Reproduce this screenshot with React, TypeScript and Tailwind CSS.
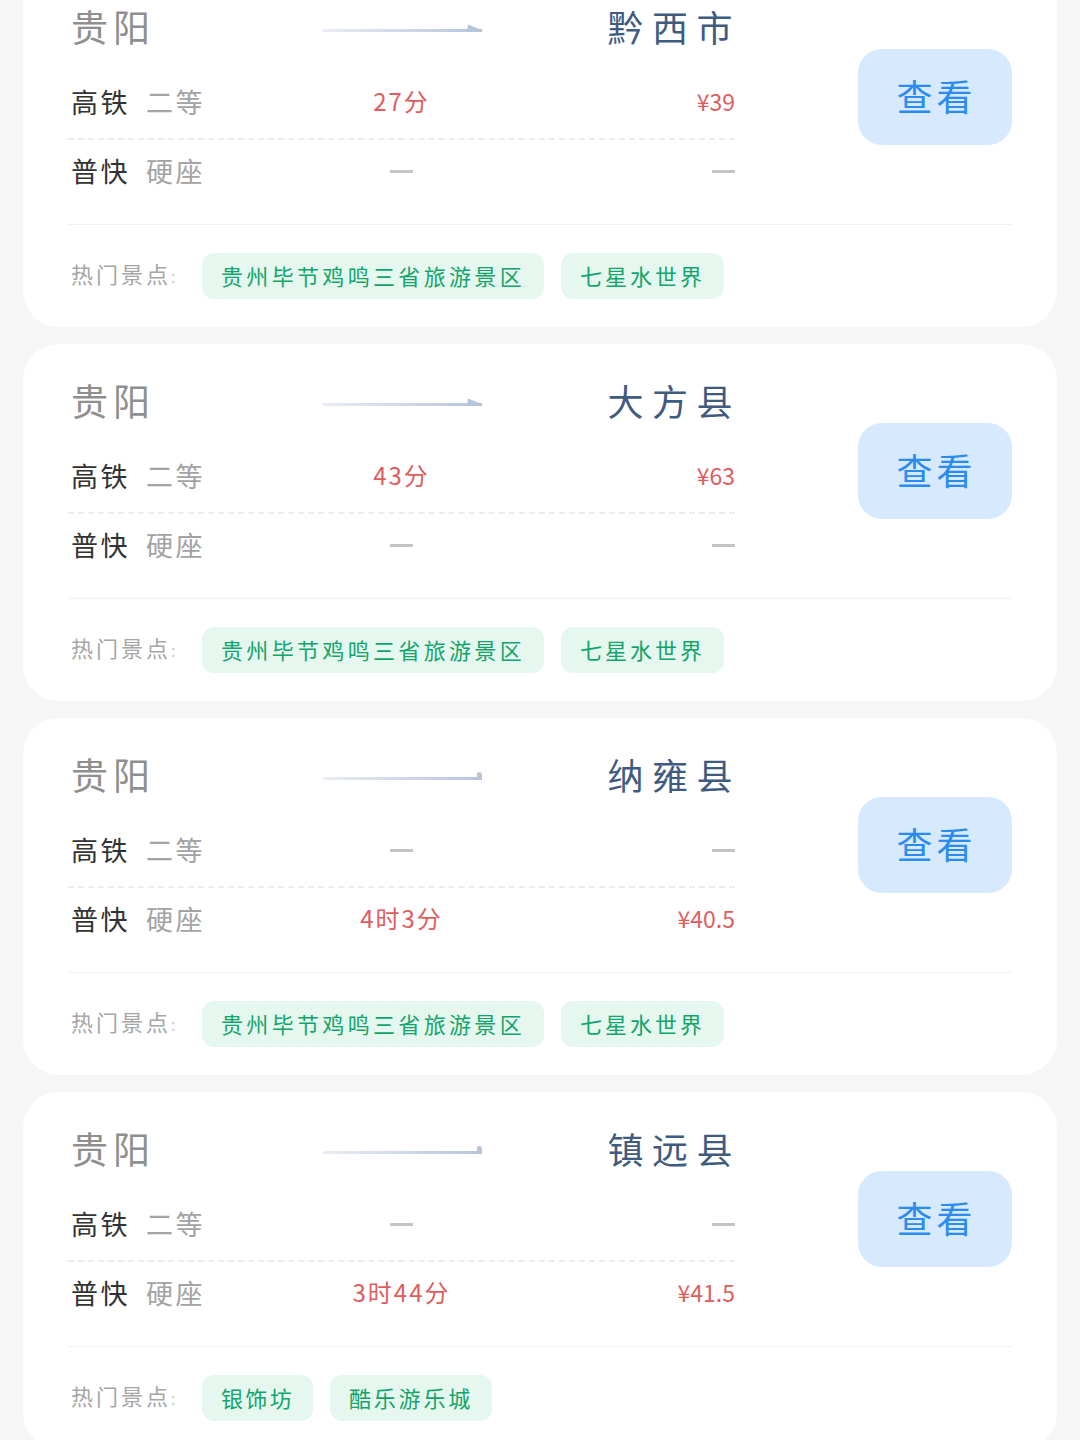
const cjk = "font-['Noto_Sans_CJK_SC','Noto_Sans',sans-serif]";

type Seat = { time?: string; price?: string };

type Route = {
  city: string;
  tip: 'big' | 'small';
  gaotie: Seat;
  pukuai: Seat;
  spots: { name: string; tracking: string }[];
};

const guizhouSpots = [
  { name: '贵州毕节鸡鸣三省旅游景区', tracking: 'tracking-[3.33px]' },
  { name: '七星水世界', tracking: 'tracking-[3px]' },
];

const routes: Route[] = [
  { city: '黔西市', tip: 'big', gaotie: { time: '27分', price: '¥39' }, pukuai: {}, spots: guizhouSpots },
  { city: '大方县', tip: 'big', gaotie: { time: '43分', price: '¥63' }, pukuai: {}, spots: guizhouSpots },
  { city: '纳雍县', tip: 'small', gaotie: {}, pukuai: { time: '4时3分', price: '¥40.5' }, spots: guizhouSpots },
  {
    city: '镇远县',
    tip: 'small',
    gaotie: {},
    pukuai: { time: '3时44分', price: '¥41.5' },
    spots: [
      { name: '银饰坊', tracking: 'tracking-[2.33px]' },
      { name: '酷乐游乐城', tracking: 'tracking-[2.8px]' },
    ],
  },
];

function Arrow({ tip, id }: { tip: 'big' | 'small'; id: string }) {
  return (
    <svg width="159" height="16" viewBox="0 0 159 16" className="ml-[33px] block">
      <defs>
        <linearGradient id={id} x1="0" x2="1" y1="0" y2="0">
          <stop offset="0" stopColor="#e9edf4" />
          <stop offset="1" stopColor="#b6c4dc" />
        </linearGradient>
      </defs>
      <rect x="0" y="11" width="159" height="3" fill={`url(#${id})`} />
      {tip === 'big' ? (
        <path d="M144 14 L145 6.5 L159 12 L159 14 Z" fill="#b6c4dc" />
      ) : (
        <path d="M154 14 L154 7 L156 6 L158 6.5 L159 8.5 L159 14 Z" fill="#b6c4dc" />
      )}
    </svg>
  );
}

function Row({ name, seat, info, dashed }: { name: string; seat: string; info: Seat; dashed?: boolean }) {
  return (
    <div
      className={`grid grid-cols-3 items-center ${
        dashed ? 'h-[73px] border-b-2 border-dashed border-[#e9ecf0]' : 'h-[63px]'
      }`}
    >
      <div className="flex items-center gap-[16px] whitespace-nowrap pb-[2px] pl-[3px] text-[27px] leading-none tracking-[2.5px]">
        <span className="text-[#333333]">{name}</span>
        <span className="text-[#a3a3a3]">{seat}</span>
      </div>
      {info.time ? (
        <span className="pb-[3px] text-center text-[24px] leading-none tracking-[2px] text-[#e05d5d]">{info.time}</span>
      ) : (
        <span className="mx-auto h-[3px] w-[23px] bg-[#c4c4c4]" />
      )}
      {info.price ? (
        <span className="pb-[3px] text-right text-[23px] leading-none text-[#e05d5d]">{info.price}</span>
      ) : (
        <span className="ml-auto h-[3px] w-[23px] bg-[#c4c4c4]" />
      )}
    </div>
  );
}

function RouteCard({ route, index }: { route: Route; index: number }) {
  return (
    <section className="h-[357px] shrink-0 rounded-[36px] bg-white px-[45px] pt-[31px]">
      <div className="flex justify-between">
        <div className="w-[667px]">
          <div className="mb-[16px] grid h-[50px] grid-cols-3 items-center">
            <span className="pl-[3px] text-[37px] leading-none tracking-[5px] text-[#8f8f8f]">贵阳</span>
            <Arrow tip={route.tip} id={`line-${index}`} />
            <span className="-mr-[6px] text-right text-[36px] leading-none tracking-[8.5px] text-[#3f5b80]">
              {route.city}
            </span>
          </div>
          <Row name="高铁" seat="二等" info={route.gaotie} dashed />
          <Row name="普快" seat="硬座" info={route.pukuai} />
        </div>
        <button className="mt-[48px] flex h-[96px] w-[154px] items-center justify-center rounded-[24px] bg-[#d6e9fd] pb-[4px] pl-[3px] text-[36px] leading-none tracking-[4px] text-[#2a8cf0]">
          查看
        </button>
      </div>
      <div className="mt-[21px] flex items-center border-t border-[#f0f1f3] pt-[28px]">
        <span className="w-[134px] whitespace-nowrap pb-[6px] pl-[3px] text-[22px] leading-none tracking-[3px] text-[#a6a6a6]">
          热门景点<span className="text-[16px] text-[#c8c8c8]">:</span>
        </span>
        <div className="flex gap-[17px]">
          {route.spots.map((spot) => (
            <span
              key={spot.name}
              className={`flex h-[46px] items-center rounded-[12px] bg-[#e6f7ef] px-[19px] pb-[3px] text-[22px] leading-none text-[#12a56b] ${spot.tracking}`}
            >
              {spot.name}
            </span>
          ))}
        </div>
      </div>
    </section>
  );
}

export default function App() {
  return (
    <div className={`h-[1440px] w-[1080px] overflow-hidden bg-[#f6f6f6] ${cjk}`}>
      <div className="mx-[23px] -mt-[30px] flex flex-col gap-[17px]">
        {routes.map((route, i) => (
          <RouteCard key={route.city} route={route} index={i} />
        ))}
      </div>
    </div>
  );
}
